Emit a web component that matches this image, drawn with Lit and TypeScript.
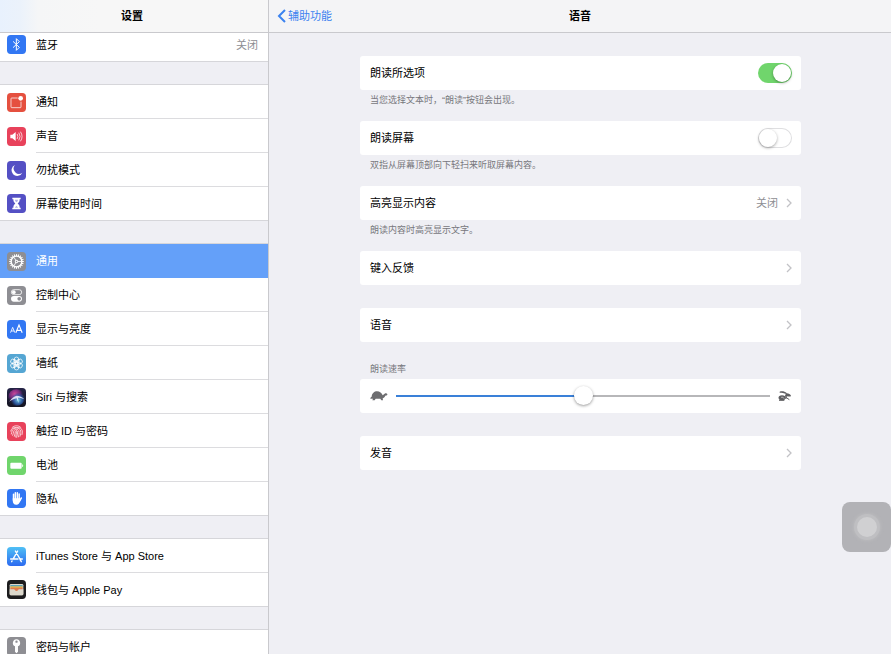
import { LitElement, html, css, svg, nothing } from "lit";
import type { TemplateResult } from "lit";
import { customElement, property, state } from "lit/decorators.js";
import { classMap } from "lit/directives/class-map.js";
import { styleMap } from "lit/directives/style-map.js";

// Sidebar glyphs, drawn on a 57-unit square with an 11-unit corner radius.
const tile = (fill: string) => svg`<rect width="57" height="57" rx="11" fill=${fill} />`;

const toothAngles = Array.from({ length: 20 }, (_, i) => i * 18);
const petalAngles = [0, 60, 120, 180, 240, 300];

const icons: Record<string, unknown> = {
  bluetooth: svg`${tile("#3277f3")}
    <path d="M19 20 L37 37 L28 46 V11 L37 20 L19 37" fill="none" stroke="#fff" stroke-width="3" stroke-linejoin="round" stroke-linecap="round" />`,
  notify: svg`${tile("#e5503f")}
    <path d="M32 15 H14 a2 2 0 0 0 -2 2 V42 a2 2 0 0 0 2 2 H40 a2 2 0 0 0 2 -2 V26" fill="none" stroke="#fff" stroke-width="2.2" />
    <circle cx="41" cy="16" r="7" fill="#fff" />`,
  sound: svg`${tile("#e8425b")}
    <path d="M10 23 H16 L26 15 V42 L16 34 H10 Z" fill="#fff" />
    <path d="M31 22 q4 6.5 0 13 M36 18 q7 10.5 0 21 M41 15 q9 13.5 0 27" fill="none" stroke="#fff" stroke-width="2.2" stroke-linecap="round" />`,
  moon: svg`${tile("#5450c4")}
    <path d="M24 12 A17 17 0 1 0 46 35 A16 16 0 0 1 24 12 Z" fill="#fff" />`,
  hourglass: svg`${tile("#5450c4")}
    <path d="M16 11 H41 V16 H38 C38 24 35 26 32 28.5 C35 31 38 33 38 41 H41 V46 H16 V41 H19 C19 33 22 31 25 28.5 C22 26 19 24 19 16 H16 Z" fill="#fff" />
    <path d="M24 17 H33 C33 20 31 23 28.5 25 C26 23 24 20 24 17 Z M24 41 C25 38 27 37 28.5 35 C30 37 32 38 33 41 Z" fill="#5450c4" opacity="0.45" />`,
  gear: svg`${tile("#8e8e93")}
    ${toothAngles.map((a) => svg`<rect x="27" y="6.5" width="3.2" height="6" fill="#fff" transform="rotate(${a} 28.5 28.5)" />`)}
    <circle cx="28.5" cy="28.5" r="16" fill="none" stroke="#fff" stroke-width="4" />
    <path d="M28.5 28.5 H43 M28.5 28.5 L21 16 M28.5 28.5 L21 41" stroke="#fff" stroke-width="2.6" />
    <circle cx="28.5" cy="28.5" r="5" fill="#fff" /><circle cx="28.5" cy="28.5" r="2.2" fill="#8e8e93" />`,
  control: svg`${tile("#8e8e93")}
    <rect x="13" y="11" width="31" height="15" rx="7.5" fill="none" stroke="#fff" stroke-width="2.4" />
    <circle cx="20.5" cy="18.5" r="5.5" fill="#fff" />
    <rect x="12" y="30" width="33" height="17" rx="8.5" fill="#fff" />
    <circle cx="36.5" cy="38.5" r="5.5" fill="#8e8e93" />`,
  display: svg`${tile("#3277f3")}
    <path d="M10.5 38 L17 22 L23.5 38 M12.5 33 H21.5" fill="none" stroke="#fff" stroke-width="2.5" />
    <path d="M26.5 38 L36 15 L45.5 38 M30 31 H42" fill="none" stroke="#fff" stroke-width="3.4" />`,
  wallpaper: svg`${tile("#55a6d3")}
    <g fill="none" stroke="#fff" stroke-width="2.2">
      ${petalAngles.map((a) => svg`<circle cx="28.5" cy="16" r="6.8" transform="rotate(${a} 28.5 28.5)" />`)}
      ${petalAngles.map((a) => svg`<path d="M28.5 26 L24.5 20 L28.5 14 L32.5 20 Z" transform="rotate(${a + 30} 28.5 28.5)" />`)}
      <circle cx="28.5" cy="28.5" r="4" />
    </g>`,
  siri: svg`
    <defs>
      <linearGradient id="siri-bg" x1="0" y1="0" x2="0" y2="1"><stop offset="0" stop-color="#252447" /><stop offset="1" stop-color="#141420" /></linearGradient>
      <radialGradient id="siri-pink" cx="0.4" cy="0.3" r="0.5"><stop offset="0" stop-color="#d64a9e" /><stop offset="0.6" stop-color="#8e2f8d" stop-opacity="0.8" /><stop offset="1" stop-color="#5a2a80" stop-opacity="0" /></radialGradient>
      <radialGradient id="siri-blue" cx="0.6" cy="0.65" r="0.45"><stop offset="0" stop-color="#6fd3e6" /><stop offset="0.6" stop-color="#2f64b8" stop-opacity="0.75" /><stop offset="1" stop-color="#204a90" stop-opacity="0" /></radialGradient>
    </defs>
    <rect width="57" height="57" rx="11" fill="url(#siri-bg)" />
    <circle cx="28.5" cy="28.5" r="25" fill="url(#siri-pink)" />
    <circle cx="28.5" cy="28.5" r="25" fill="url(#siri-blue)" />
    <path d="M6 41 C14 31 21 25 29 23 C37 23 46 27 52 34 C43 30 37 29 33 29 L35 46 L29 31 C21 32 14 37 6 41 Z" fill="#f3f4ff" opacity="0.85" />`,
  touch: svg`${tile("#e8425b")}
    <g fill="none" stroke="#fff" stroke-width="2.1" stroke-linecap="round">
      <path d="M15 17 C22 9 35 9 42 17" />
      <path d="M11 27 C13 12 44 12 46 27 C46.5 31 46 35 45 38" />
      <path d="M13 36 C14 33 14 31 15 27 C18 15 39 15 41 27 C42 33 41 38 39 43" />
      <path d="M17 40 C19 36 19 32 20 28 C22 20 35 20 36 28 C37 34 36 40 34 45" />
      <path d="M22 43 C24 38 24 33 25 28 C26 25 31 25 32 28 C32 35 31 41 29 46" />
      <path d="M28.5 29 C28 36 27 41 26 45" />
    </g>`,
  battery: svg`${tile("#70d56c")}
    <rect x="10" y="20" width="34" height="18" rx="3" fill="#fff" />
    <path d="M45.5 25 q3 0.5 3 4 q0 3.5 -3 4 Z" fill="#fff" />`,
  hand: svg`${tile("#3277f3")}
    <g fill="none" stroke="#fff" stroke-width="4.4" stroke-linecap="round">
      <path d="M19.5 16 V34 M25 11.5 V32 M31 11 V32 M36.5 15 V34 M43 27 L37 37" />
    </g>
    <path d="M17.3 28 H38.7 L41 33.5 C38 40 36 47 28 47 C20 47 17.3 41 17.3 35 Z" fill="#fff" />`,
  store: svg`
    <defs><linearGradient id="store-bg" x1="0" y1="0" x2="0" y2="1"><stop offset="0" stop-color="#4fc0f5" /><stop offset="1" stop-color="#2c6af0" /></linearGradient></defs>
    <rect width="57" height="57" rx="11" fill="url(#store-bg)" />
    <path d="M25 12 L39 36 M32 12 L19 35 M11 36 H33 M40 36 H46 M15 42 L14 44 M39 37 L43 44" fill="none" stroke="#fff" stroke-width="4.2" stroke-linecap="round" />`,
  wallet: svg`${tile("#1c1c1e")}
    <rect x="8" y="12" width="41" height="34" rx="4" fill="#dcd8cc" />
    <path d="M10 15 H47 V20 H10 Z" fill="#5ba3b4" />
    <path d="M10 19 H47 V24 H10 Z" fill="#e0b04d" />
    <path d="M10 23 H47 V31 H37 C34 31 34 36 28.5 36 C23 36 23 31 20 31 H10 Z" fill="#e07a4e" />
    <path d="M8 28 H21 C23 28 24 33 28.5 33 C33 33 34 28 36 28 H49 V42 a4 4 0 0 1 -4 4 H12 a4 4 0 0 1 -4 -4 Z" fill="#dcd8cc" />`,
  key: svg`${tile("#8e8e93")}
    <path d="M28.5 7 a11 11 0 0 1 4.5 21 V44 L28.5 49 L24 44 V28 a11 11 0 0 1 4.5 -21 Z" fill="#fff" />
    <circle cx="28.5" cy="14" r="3.5" fill="#8e8e93" />`,
};

interface Entry {
  icon: string;
  label: string;
  value?: string;
}

const groups: Entry[][] = [
  [{ icon: "bluetooth", label: "蓝牙", value: "关闭" }],
  [
    { icon: "notify", label: "通知" },
    { icon: "sound", label: "声音" },
    { icon: "moon", label: "勿扰模式" },
    { icon: "hourglass", label: "屏幕使用时间" },
  ],
  [
    { icon: "gear", label: "通用" },
    { icon: "control", label: "控制中心" },
    { icon: "display", label: "显示与亮度" },
    { icon: "wallpaper", label: "墙纸" },
    { icon: "siri", label: "Siri 与搜索" },
    { icon: "touch", label: "触控 ID 与密码" },
    { icon: "battery", label: "电池" },
    { icon: "hand", label: "隐私" },
  ],
  [
    { icon: "store", label: "iTunes Store 与 App Store" },
    { icon: "wallet", label: "钱包与 Apple Pay" },
  ],
  [{ icon: "key", label: "密码与帐户" }],
];

const base = css`
  * {
    box-sizing: border-box;
  }
  .bar {
    flex: none;
    height: 33px;
    border-bottom: 1px solid #c9c9cd;
    display: grid;
    align-items: center;
  }
  .title {
    margin: 0;
    font-size: 11px;
    line-height: 16px;
    font-weight: 700;
    text-align: center;
    color: #000;
  }
`;

@customElement("settings-sidebar")
export class SettingsSidebar extends LitElement {
  @state() private selected = "gear";

  static styles = [
    base,
    css`
      :host {
        display: flex;
        flex-direction: column;
        min-width: 0;
        overflow: hidden;
        border-right: 1px solid #c9c9cd;
        background: #efeff4;
      }
      .bar {
        position: relative;
        z-index: 1;
        padding-right: 4px;
        background: linear-gradient(90deg, #e8f1fd 0, #ebf2fb 20px, #f5f6f7 38px, #f7f7f7 100px);
      }
      .list {
        flex: 1;
        min-height: 0;
        overflow: hidden;
        display: flex;
        flex-direction: column;
        gap: 23px;
      }
      /* The list rests slightly scrolled, its first row partly under the bar. */
      .list::before {
        content: "";
        flex: none;
        margin-bottom: -28px;
      }
      .group {
        flex: none;
        background: #fff;
        box-shadow: 0 -1px 0 #d6d6da;
      }
      .row {
        display: flex;
        align-items: center;
        height: 34px;
        padding-left: 7px;
        color: #000;
        font-size: 11px;
        line-height: 16px;
        text-decoration: none;
      }
      .icon {
        flex: none;
        width: 19px;
        height: 19px;
        margin-right: 10px;
      }
      .cell {
        flex: 1;
        align-self: stretch;
        display: flex;
        align-items: center;
        justify-content: space-between;
        padding-right: 10px;
        border-bottom: 1px solid #dcdcdf;
        white-space: nowrap;
      }
      .row:last-child {
        border-bottom: 1px solid #d6d6da;
      }
      .row:last-child .cell {
        border-bottom: 0;
      }
      .value {
        color: #8e8e93;
      }
      .selected {
        background: #64a0f9;
        color: #fff;
      }
      .selected .cell {
        border-color: #64a0f9;
      }
    `,
  ];

  private row(e: Entry): TemplateResult {
    const on = e.icon === this.selected;
    return html`<a
      href="#${e.icon}"
      class=${classMap({ row: true, selected: on })}
      aria-current=${on ? "page" : nothing}
      @click=${() => (this.selected = e.icon)}
    >
      <svg class="icon" viewBox="0 0 57 57" aria-hidden="true">${icons[e.icon]}</svg>
      <span class="cell">
        <span>${e.label}</span>
        ${e.value ? html`<span class="value">${e.value}</span>` : nothing}
      </span>
    </a>`;
  }

  render() {
    return html`
      <header class="bar"><h1 class="title">设置</h1></header>
      <nav class="list" aria-label="设置">
        ${groups.map((g) => html`<div class="group">${g.map((e) => this.row(e))}</div>`)}
      </nav>
    `;
  }
}

@customElement("settings-detail")
export class SettingsDetail extends LitElement {
  @property({ type: Number }) rate = 50;

  static styles = [
    base,
    css`
      :host {
        display: flex;
        flex-direction: column;
        min-width: 0;
        background: #efeff4;
      }
      .bar {
        grid-template-columns: 1fr auto 1fr;
        padding: 0 8px;
        background: #f4f4f6;
      }
      .back {
        justify-self: start;
        display: flex;
        align-items: center;
        gap: 2px;
        color: #3b82f0;
        font-size: 11px;
        line-height: 16px;
        text-decoration: none;
      }
      .back svg {
        width: 9px;
        height: 14px;
      }
      .content {
        display: flex;
        flex-direction: column;
        padding: 23px 90px 23px 91px;
      }
      .card {
        display: flex;
        align-items: center;
        width: 100%;
        height: 34px;
        padding: 0 9px 0 10px;
        border: 0;
        border-radius: 3px;
        background: #fff;
        color: #000;
        font: inherit;
        font-size: 11px;
        line-height: 16px;
        text-align: left;
      }
      .label {
        flex: 1;
      }
      .value {
        color: #8e8e93;
        margin-right: 8px;
      }
      .chevron {
        flex: none;
        width: 6px;
        height: 10px;
      }
      .note {
        margin: 0;
        height: 31px;
        padding: 4px 10px 0;
        font-size: 9px;
        line-height: 12px;
        color: #77777c;
      }
      .heading {
        display: flex;
        align-items: flex-end;
        height: 37px;
        padding: 0 10px 4px;
        font-size: 9px;
        line-height: 12px;
        color: #77777c;
      }
      .spaced {
        margin-top: 23px;
      }
      .switch {
        appearance: none;
        flex: none;
        display: flex;
        align-items: center;
        width: 34px;
        height: 20px;
        margin: 0;
        padding: 0 1px;
        border-radius: 10px;
        background: #fff;
        box-shadow: inset 0 0 0 1px #dfdfe1;
      }
      .switch::before {
        content: "";
        width: 18px;
        height: 18px;
        border-radius: 50%;
        background: #fff;
        box-shadow: 0 1px 3px rgba(0, 0, 0, 0.35);
      }
      .switch:checked {
        justify-content: flex-end;
        background: #70d56c;
        box-shadow: none;
      }
      .animal {
        flex: none;
        width: 18px;
        height: 12px;
      }
      .hare {
        width: 14px;
      }
      .slider {
        appearance: none;
        flex: 1;
        min-width: 0;
        height: 20px;
        margin: 0 8px;
        background: transparent;
      }
      .slider::-webkit-slider-runnable-track {
        height: 2px;
        background: linear-gradient(90deg, #3a80d8 var(--fill), #b7b7b9 var(--fill));
      }
      .slider::-webkit-slider-thumb {
        appearance: none;
        width: 19px;
        height: 19px;
        margin-top: -9px;
        border-radius: 50%;
        background: #fff;
        box-shadow: 0 1px 3px rgba(0, 0, 0, 0.4);
      }
    `,
  ];

  private chevron() {
    return html`<svg class="chevron" viewBox="0 0 6 10" aria-hidden="true">
      <path d="M1 1 L5 5 L1 9" fill="none" stroke="#c2c2c6" stroke-width="1.3" />
    </svg>`;
  }

  private link(label: string, value = "", spaced = false) {
    return html`<button type="button" class=${classMap({ card: true, spaced })}>
      <span class="label">${label}</span>
      ${value ? html`<span class="value">${value}</span>` : nothing} ${this.chevron()}
    </button>`;
  }

  private toggle(label: string, on: boolean) {
    return html`<label class="card">
      <span class="label">${label}</span>
      <input class="switch" type="checkbox" role="switch" .checked=${on} />
    </label>`;
  }

  render() {
    return html`
      <header class="bar">
        <a class="back" href="#accessibility">
          <svg viewBox="0 0 9 14" aria-hidden="true">
            <path d="M8 1 L2 7 L8 13" fill="none" stroke="#3b82f0" stroke-width="2" />
          </svg>
          辅助功能
        </a>
        <h2 class="title">语音</h2>
      </header>
      <main class="content">
        ${this.toggle("朗读所选项", true)}
        <p class="note">当您选择文本时，“朗读”按钮会出现。</p>
        ${this.toggle("朗读屏幕", false)}
        <p class="note">双指从屏幕顶部向下轻扫来听取屏幕内容。</p>
        ${this.link("高亮显示内容", "关闭")}
        <p class="note">朗读内容时高亮显示文字。</p>
        ${this.link("键入反馈")} ${this.link("语音", "", true)}
        <label class="heading" for="rate">朗读速率</label>
        <div class="card">
          <svg class="animal" viewBox="0 0 54 36" aria-hidden="true">
            <path
              d="M5 20 C6 10 13 4 21 4 C29 4 36 9 38 16 C41 15 43 11 46 10 C50 10 53 12 52 14 C51 17 48 16 46 17 C44 21 41 24 38 25 L39 31 H34 L31 26 H17 L14 31 H7 L9 26 C6 26 3 27 1 26 C1 23 3 21 5 20 Z"
              fill="#6d6d70"
            />
          </svg>
          <input
            id="rate"
            class="slider"
            type="range"
            min="0"
            max="100"
            .value=${String(this.rate)}
            style=${styleMap({ "--fill": `${this.rate}%` })}
            @input=${(e: Event) => (this.rate = Number((e.target as HTMLInputElement).value))}
          />
          <svg class="animal hare" viewBox="0 0 42 36" aria-hidden="true">
            <path d="M5 5 C12 2 20 4 26 9 L25 12 C18 9 11 8 5 8 Z" fill="#5e5e61" />
            <path d="M24 10 C31 9 37 13 39 17 C38 20 33 20 29 19 L23 22 L21 17 Z" fill="#5e5e61" />
            <ellipse cx="12" cy="23" rx="10.5" ry="7.5" fill="#5e5e61" />
            <path d="M3 31 H19 M19 19 L34 29 M18 26 L27 23" fill="none" stroke="#5e5e61" stroke-width="3" />
            <path d="M9 22 q7 -3 9 4" fill="none" stroke="#fff" stroke-width="1.5" />
          </svg>
        </div>
        ${this.link("发音", "", true)}
      </main>
    `;
  }
}

@customElement("app-root")
export class AppRoot extends LitElement {
  static styles = css`
    :host {
      position: relative;
      display: grid;
      grid-template-columns: minmax(269px, 30%) 1fr;
      grid-template-rows: 100vh;
      overflow: hidden;
      background: #efeff4;
      font-family: "Liberation Sans", "Noto Sans CJK SC", sans-serif;
    }
    .assist {
      position: absolute;
      right: 0;
      bottom: 102px;
      display: grid;
      place-items: center;
      width: 49px;
      height: 50px;
      padding: 0;
      border: 0;
      border-radius: 8px;
      background: #b2b2b6;
    }
    .dot {
      width: 20px;
      height: 20px;
      border-radius: 50%;
      background: #d0d0d2;
      box-shadow: 0 0 0 3px #bfbfc2, 0 0 3px 4px #bababd;
    }
  `;

  render() {
    return html`
      <settings-sidebar lang="zh-CN"></settings-sidebar>
      <settings-detail lang="zh-CN"></settings-detail>
      <button type="button" class="assist" aria-label="辅助触控"><span class="dot"></span></button>
    `;
  }
}
